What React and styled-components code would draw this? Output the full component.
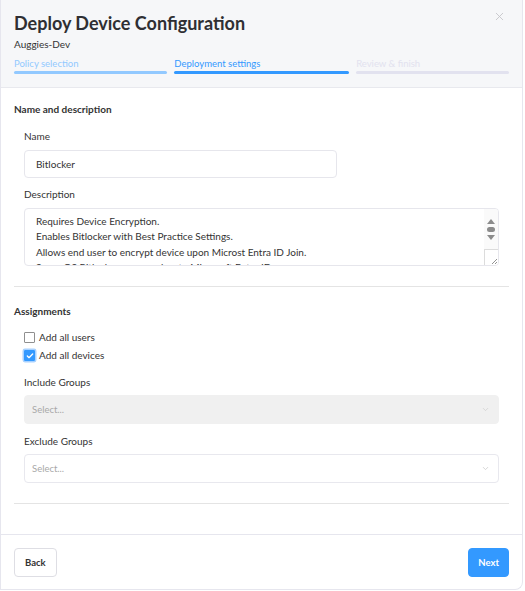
import React from 'react';
import styled, { createGlobalStyle } from 'styled-components';
import { X, ChevronDown, Check } from 'lucide-react';

const GlobalStyle = createGlobalStyle`
    body {
        margin: 0;
        background: #ffffff;
        font-family: 'Lato', 'Noto Sans', sans-serif;
        color: #333333;
    }
`;

const Modal = styled.div`
    display: flex;
    flex-direction: column;
    box-sizing: border-box;
    width: 523px;
    height: 590px;
    background: #ffffff;
    border: 1px solid #e6e6ee;
    border-top: none;
    border-radius: 0 0 8px 0;
    overflow: hidden;
`;

const Header = styled.div`
    position: relative;
    padding: 11px 13px 13px 13px;
    background: #f6f7f9;
    border-bottom: 1px solid #e8e9ee;
`;

const Title = styled.h2`
    margin: 0;
    font-size: 18px;
    font-weight: 700;
    line-height: 24px;
    color: #2f2f33;
`;

const Subtitle = styled.div`
    margin-top: 2px;
    font-size: 10px;
    line-height: 14px;
    color: #333;
`;

const CloseButton = styled.button`
    position: absolute;
    top: 10px;
    right: 16px;
    padding: 0;
    border: none;
    background: transparent;
    color: #c4c4c8;
    cursor: pointer;
    display: flex;
`;

const Steps = styled.div`
    display: flex;
    gap: 7px;
    margin-top: 6px;
`;

const Step = styled.div`
    flex: 1 1 auto;
    display: flex;
    flex-direction: column;
    gap: 1px;
    font-size: 9.5px;
    line-height: 13px;
    color: ${(p) => p.color};
    &::after {
        content: '';
        height: 3px;
        border-radius: 2px;
        background: ${(p) => p.color};
    }
`;

const Body = styled.div`
    flex: 1;
    padding: 0 13px;
`;

const Section = styled.div`
    padding: ${(p) => p.pad};
    border-bottom: 1px solid #e4e4e4;
`;

const SectionTitle = styled.h4`
    margin: 0 0 13px;
    font-size: 10px;
    font-weight: 700;
    line-height: 14px;
    color: #333;
`;

const Field = styled.div`
    padding: 0 10px;
    margin-bottom: ${(p) => p.mb || 0}px;
`;

const Label = styled.div`
    font-size: 10px;
    line-height: 14px;
    color: #333;
    margin-bottom: ${(p) => p.mb || 6}px;
`;

const TextInput = styled.div`
    box-sizing: border-box;
    width: 313px;
    height: 28px;
    padding: 0 11px;
    display: flex;
    align-items: center;
    font-size: 10px;
    color: #333;
    border: 1px solid #e6e6ec;
    border-radius: 4px;
`;

const TextArea = styled.div`
    position: relative;
    box-sizing: border-box;
    height: 58px;
    padding: 5px 20px 0 11px;
    font-size: 10px;
    line-height: 15.3px;
    color: #333;
    border: 1px solid #e6e6ec;
    border-radius: 4px;
    overflow: hidden;
`;

const ScrollBar = styled.div`
    position: absolute;
    top: 0;
    right: 0;
    bottom: 0;
    width: 14px;
    display: flex;
    flex-direction: column;
    background: #fafafa;
`;

const ScrollArrows = styled.div`
    flex: 1;
    display: flex;
    flex-direction: column;
    align-items: center;
    justify-content: center;
    gap: 3px;
`;

const Resizer = styled.div`
    height: 15px;
    border-top: 1px solid #dcdcdc;
    border-left: 1px solid #dcdcdc;
    background: #ffffff;
    display: flex;
    align-items: flex-end;
    justify-content: flex-end;
`;

const CheckRow = styled.label`
    display: flex;
    align-items: center;
    gap: 4px;
    font-size: 10px;
    line-height: 13px;
    color: #333;
    margin-bottom: ${(p) => p.mb || 0}px;
`;

const Box = styled.span`
    box-sizing: border-box;
    width: 11px;
    height: 11px;
    border-radius: 1px;
    display: flex;
    align-items: center;
    justify-content: center;
    border: 1px solid ${(p) => (p.checked ? '#3399ff' : '#8f8f8f')};
    background: ${(p) => (p.checked ? '#3399ff' : '#fff')};
    box-shadow: ${(p) => (p.checked ? '0 0 0 1.5px #a9d2ff' : 'none')};
    color: #fff;
`;

const Select = styled.div`
    box-sizing: border-box;
    height: 29px;
    padding: 0 8px 0 7px;
    display: flex;
    align-items: center;
    justify-content: space-between;
    font-size: 9.5px;
    color: #a8a8a8;
    border-radius: 4px;
    border: 1px solid ${(p) => (p.disabled ? '#f0f0f0' : '#e8e8ee')};
    background: ${(p) => (p.disabled ? '#f0f0f0' : '#fff')};
`;

const Footer = styled.div`
    box-sizing: border-box;
    display: flex;
    justify-content: space-between;
    align-items: center;
    height: 55px;
    padding: 1px 13px 0 13px;
    border-top: 1px solid #e6e6ee;
`;

const Button = styled.button`
    height: 29px;
    padding: 0 ${(p) => (p.primary ? 9 : 10)}px;
    font-family: 'Lato', sans-serif;
    font-size: 9.5px;
    font-weight: 700;
    border-radius: 4px;
    cursor: pointer;
    border: 1px solid ${(p) => (p.primary ? '#3399ff' : '#dedee4')};
    background: ${(p) => (p.primary ? '#3399ff' : '#fff')};
    color: ${(p) => (p.primary ? '#fff' : '#333')};
`;

const Tri = ({ up }) => (
    <svg width="8" height="5" viewBox="0 0 8 5">
        <path d={up ? 'M4 0L8 5H0Z' : 'M0 0H8L4 5Z'} fill="#8c8c8c" />
    </svg>
);

export default function App() {
    return (
        <>
            <GlobalStyle />
            <Modal>
                <Header>
                    <Title>Deploy Device Configuration</Title>
                    <Subtitle>Auggies-Dev</Subtitle>
                    <CloseButton>
                        <X size={13} strokeWidth={1.6} />
                    </CloseButton>
                    <Steps>
                        <Step color="#92c9ff">Policy selection</Step>
                        <Step color="#3399ff">Deployment settings</Step>
                        <Step color="#e2e2ef">Review &amp; finish</Step>
                    </Steps>
                </Header>
                <Body>
                    <Section pad="14px 0 20px">
                        <SectionTitle>Name and description</SectionTitle>
                        <Field mb={9}>
                            <Label mb={7}>Name</Label>
                            <TextInput>Bitlocker</TextInput>
                        </Field>
                        <Field>
                            <Label mb={7}>Description</Label>
                            <TextArea>
                                Requires Device Encryption.
                                <br />
                                Enables Bitlocker with Best Practice Settings.
                                <br />
                                Allows end user to encrypt device upon Microst Entra ID Join.
                                <br />
                                Syncs OS Bitlocker recovery key to Microsoft Entra ID.
                                <ScrollBar>
                                    <ScrollArrows>
                                        <Tri up />
                                        <svg width="8" height="5" viewBox="0 0 8 5">
                                            <rect width="8" height="5" rx="2.5" fill="#8c8c8c" />
                                        </svg>
                                        <Tri />
                                    </ScrollArrows>
                                    <Resizer>
                                        <svg width="8" height="8" viewBox="0 0 8 8">
                                            <path d="M7 2L2 7M7 5L5 7" stroke="#777" strokeWidth="0.8" />
                                        </svg>
                                    </Resizer>
                                </ScrollBar>
                            </TextArea>
                        </Field>
                    </Section>
                    <Section pad="17px 0 20px">
                        <SectionTitle>Assignments</SectionTitle>
                        <Field>
                            <CheckRow mb={5}>
                                <Box />
                                Add all users
                            </CheckRow>
                            <CheckRow mb={13}>
                                <Box checked>
                                    <Check size={8} strokeWidth={4} />
                                </Box>
                                Add all devices
                            </CheckRow>
                        </Field>
                        <Field mb={10}>
                            <Label>Include Groups</Label>
                            <Select disabled>
                                Select...
                                <ChevronDown size={9} color="#cfcfcf" />
                            </Select>
                        </Field>
                        <Field>
                            <Label>Exclude Groups</Label>
                            <Select>
                                Select...
                                <ChevronDown size={9} color="#c8c8c8" />
                            </Select>
                        </Field>
                    </Section>
                </Body>
                <Footer>
                    <Button>Back</Button>
                    <Button primary>Next</Button>
                </Footer>
            </Modal>
        </>
    );
}
